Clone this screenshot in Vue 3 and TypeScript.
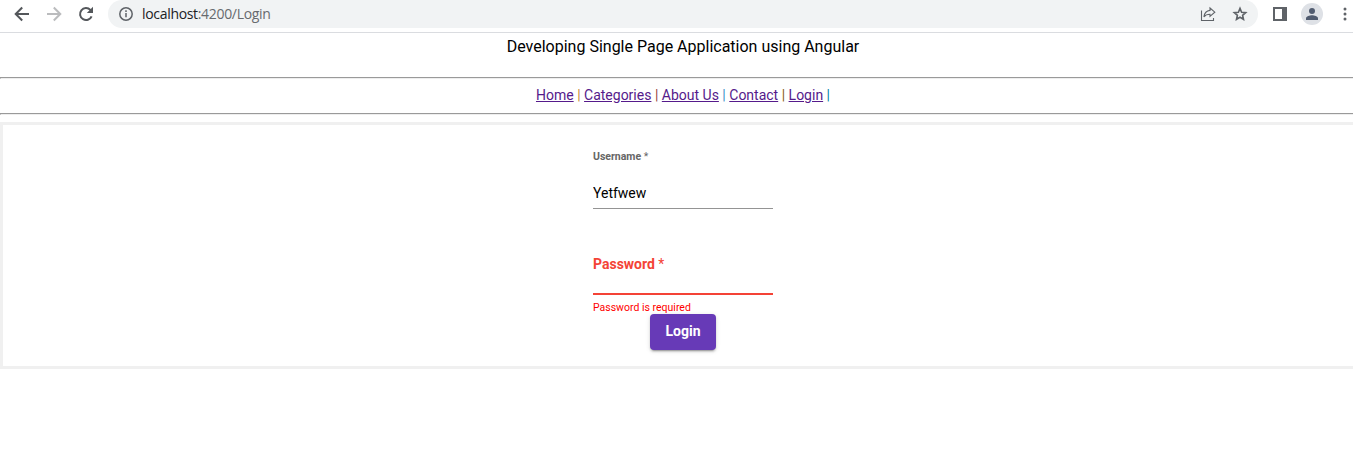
<script setup lang="ts">
import { ref } from 'vue'

interface NavLink {
  label: string
  href: string
  tone: string
}

const links: NavLink[] = [
  { label: 'Home', href: '#home', tone: 'amber' },
  { label: 'Categories', href: '#categories', tone: 'rust' },
  { label: 'About Us', href: '#about', tone: 'blue' },
  { label: 'Contact', href: '#contact', tone: 'brown' },
  { label: 'Login', href: '#login', tone: 'teal' },
]

const username = ref('Yetfwew')
const password = ref('')
</script>

<template>
  <div class="page">
    <header class="browser">
      <div class="nav-icons">
        <svg width="16" height="16" viewBox="0 0 16 16" fill="none" stroke="#54575b" stroke-width="2">
          <path d="M15 8H2.2M8.2 1.5 1.7 8l6.5 6.5" />
        </svg>
        <svg width="16" height="16" viewBox="0 0 16 16" fill="none" stroke="#bbbcbe" stroke-width="2">
          <path d="M1 8h12.8M7.8 1.5 14.3 8l-6.5 6.5" />
        </svg>
        <svg width="16" height="16" viewBox="0 0 16 16" fill="none" stroke="#54575b" stroke-width="2">
          <path d="M13.6 10.3A6 6 0 1 1 12.4 3.9L14 5.5" />
          <path d="M15 .8V7H8.8z" fill="#54575b" stroke="none" />
        </svg>
      </div>
      <div class="address">
        <svg class="info" width="16" height="16" viewBox="0 0 16 16" fill="none" stroke="#5f6368" stroke-width="1.5">
          <circle cx="8" cy="8" r="6.2" />
          <path d="M8 7v4.3M8 4.3v1.6" />
        </svg>
        <span class="url"><span class="host">localhost</span>:4200/Login</span>
        <svg class="share" width="16" height="16" viewBox="0 0 16 16" fill="none" stroke="#5f6368" stroke-width="1.1">
          <path d="M1.5 4.5v10h12V12" />
          <path d="M10 2 14.8 6.2 10 10.4V8.2C7.3 8.2 5.3 8.9 3.9 10.8 4.4 7.4 6.5 4.8 10 4.4z" />
        </svg>
        <svg class="star" width="16" height="16" viewBox="0 0 16 16" fill="none" stroke="#5f6368" stroke-width="1.6">
          <path d="m8 2.4 1.6 3.8 4.1.4-3.1 2.7.9 4L8 11.2l-3.5 2.1.9-4L2.3 6.6l4.1-.4z" />
        </svg>
      </div>
      <svg class="panel" width="14" height="14" viewBox="0 0 14 14">
        <path d="M0 0h14v14H0zM2 2v10h7V2z" fill="#5f6368" fill-rule="evenodd" />
      </svg>
      <svg class="avatar" width="22" height="22" viewBox="0 0 22 22">
        <circle cx="11" cy="11" r="11" fill="#dee1e6" />
        <circle cx="11" cy="8" r="3" fill="#515c70" />
        <path d="M5 17v-1.6C5 13.2 8.8 12.3 11 12.3s6 .9 6 3.1V17z" fill="#515c70" />
      </svg>
      <svg class="dots" width="4" height="14" viewBox="0 0 4 14" fill="#5f6368">
        <circle cx="2" cy="2" r="1.5" />
        <circle cx="2" cy="7" r="1.5" />
        <circle cx="2" cy="12" r="1.5" />
      </svg>
    </header>

    <main>
      <div class="title">Developing Single Page Application using Angular</div>
      <div class="rule"></div>
      <nav class="menu">
        <template v-for="link in links" :key="link.label"><a :href="link.href">{{ link.label }}</a> <span :class="link.tone">|</span>{{ ' ' }}</template>
      </nav>
      <div class="rule"></div>
      <section class="card">
        <form class="form" @submit.prevent>
          <label class="user-label" for="username"><b>Username</b> *</label>
          <input id="username" v-model="username" class="field" type="text" />
          <label class="pass-label" for="password"><b>Password</b> *</label>
          <input id="password" v-model="password" class="field invalid" type="password" />
          <div class="error">Password is required</div>
          <button class="submit" type="submit">Login</button>
        </form>
      </section>
    </main>
  </div>
</template>

<style>
body {
  background: #fff;
}
</style>

<style scoped>
.page {
  height: 460px;
  overflow: hidden;
  background: #fff;
  font-family: Roboto, "Liberation Sans", sans-serif;
  color: #000;
}
.page * {
  box-sizing: border-box;
}
svg {
  display: block;
  flex: none;
}
.browser {
  display: flex;
  height: 33px;
  padding: 0 0 5px;
  border-bottom: 1px solid #dadce0;
  align-items: center;
}
.nav-icons {
  display: flex;
  flex: none;
  gap: 16px;
  padding-left: 14px;
  width: 108px;
  padding-top: 1px;
}
.address {
  display: flex;
  flex: none;
  align-items: center;
  width: 1150px;
  height: 28px;
  padding: 0 10px;
  border-radius: 14px;
  background: #f1f3f4;
}
.address svg {
  margin-top: 1px;
}
.url {
  flex: 1;
  margin-left: 8px;
  font: 14px/20px "Open Sans", "Noto Sans", sans-serif;
  letter-spacing: -0.32px;
  color: #676a6e;
}
.host {
  color: #202124;
}
.address .star {
  margin-left: 16px;
}
.panel {
  margin: 1px 0 0 15px;
}
.avatar {
  margin: 1px 0 0 14px;
}
.dots {
  margin: 1px 0 0 20px;
}
.title {
  height: 44px;
  padding-top: 4px;
  padding-left: 13px;
  text-align: center;
  font-size: 16px;
  line-height: 20px;
}
.rule {
  height: 2px;
  border-top: 1px solid #9a9a9a;
  border-bottom: 1px solid #eee;
  border-left: 1px solid #9a9a9a;
}
.menu {
  height: 34px;
  padding-top: 6px;
  padding-left: 13px;
  text-align: center;
  font-size: 14px;
  line-height: 20px;
}
.menu a {
  color: #551a8b;
  text-decoration: underline;
}
.amber {
  color: #c58a35;
}
.rust {
  color: #98463c;
}
.blue {
  color: #3b8fc8;
}
.brown {
  color: #8a5a10;
}
.teal {
  color: #0083a8;
}
.card {
  height: 247px;
  margin-top: 7px;
  border: 3px solid #f0f0f0;
  border-right: 0;
}
.form {
  display: flex;
  flex-direction: column;
  width: 180px;
  margin-left: 590px;
}
.user-label {
  margin-top: 25px;
  font-size: 10.5px;
  line-height: 14px;
  color: #666;
}
.pass-label {
  margin-top: 45px;
  font-size: 14px;
  line-height: 20px;
  color: #f44336;
}
.user-label b,
.pass-label b {
  font-weight: 700;
}
.field {
  width: 180px;
  height: 26px;
  margin: 19px 0 0;
  padding: 0 0 6px;
  border: 0;
  border-bottom: 1px solid #949494;
  border-radius: 0;
  outline: 0;
  background: transparent;
  font: 14px/20px Roboto, sans-serif;
  color: #000;
}
.field.invalid {
  height: 20px;
  margin-top: 1px;
  border-bottom: 2px solid #f44336;
}
.error {
  height: 19px;
  padding-top: 6px;
  font-size: 10.5px;
  line-height: 14px;
  color: #f00;
}
.submit {
  width: 66px;
  height: 36px;
  margin: 0 auto;
  padding: 0 0 2px;
  border: 0;
  border-radius: 4px;
  background: #673ab7;
  color: #fff;
  font: 700 14px/20px Roboto, sans-serif;
  box-shadow: 0 3px 1px -2px rgba(0, 0, 0, 0.2), 0 2px 2px rgba(0, 0, 0, 0.14), 0 1px 5px rgba(0, 0, 0, 0.12);
}
</style>
